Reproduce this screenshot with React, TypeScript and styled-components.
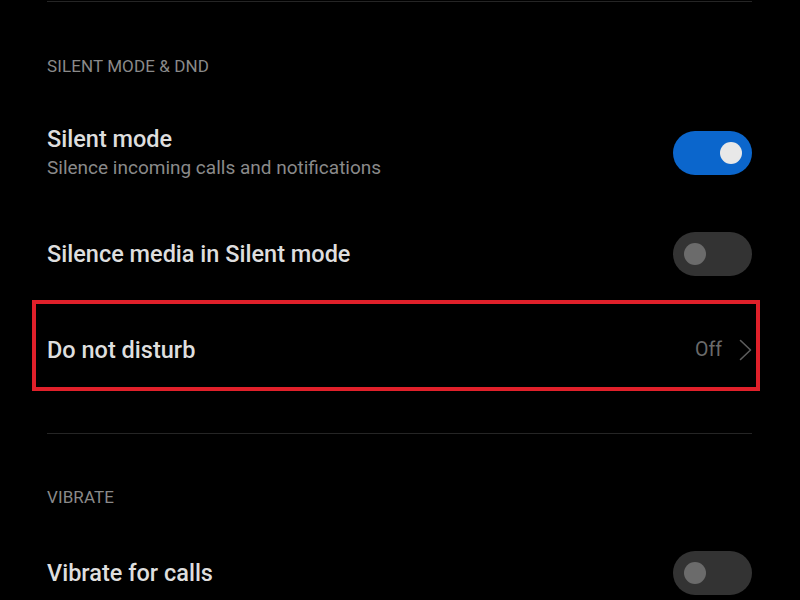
import React from "react";
import styled, { createGlobalStyle } from "styled-components";

const GlobalStyle = createGlobalStyle`
  html, body {
    margin: 0;
    padding: 0;
    background: #000;
  }
  body {
    font-family: Roboto, "Noto Sans", "Liberation Sans", sans-serif;
    -webkit-font-smoothing: antialiased;
  }
`;

const Page = styled.div`
  width: 800px;
  height: 600px;
  overflow: hidden;
  background: #000;
  box-sizing: border-box;
  padding: 1px 48px 0 47px;
  display: flex;
  flex-direction: column;
`;

const Divider = styled.div<{ $top?: number }>`
  height: 1px;
  background: #252525;
  margin-top: ${(p) => p.$top ?? 0}px;
  flex-shrink: 0;
`;

const SectionHeader = styled.div<{ $top: number }>`
  padding-top: ${(p) => p.$top}px;
  font-size: 17px;
  line-height: 20px;
  color: #8a8a8a;
  text-transform: uppercase;
  letter-spacing: 0.1px;
`;

const Row = styled.div<{ $pt: number; $pb: number; $highlight?: boolean }>`
  display: flex;
  align-items: center;
  justify-content: space-between;
  flex-shrink: 0;
  padding-top: ${(p) => p.$pt}px;
  padding-bottom: ${(p) => p.$pb}px;
  ${(p) =>
    p.$highlight
      ? `
    border: 4px solid #e0202a;
    margin: 0 -8px 0 -15px;
    padding-left: 11px;
    padding-right: 4px;
  `
      : ""}
`;

const TextBlock = styled.div`
  display: flex;
  flex-direction: column;
`;

const Title = styled.div`
  font-size: 23.5px;
  line-height: 28px;
  font-weight: 500;
  color: #dedede;
`;

const Subtitle = styled.div`
  font-size: 19px;
  line-height: 24px;
  margin-top: 3px;
  color: #8a8a8a;
`;

const Track = styled.div<{ $on: boolean }>`
  width: 79px;
  height: 44px;
  border-radius: 22px;
  background: ${(p) => (p.$on ? "#0b66cc" : "#333333")};
  display: flex;
  align-items: center;
  justify-content: ${(p) => (p.$on ? "flex-end" : "flex-start")};
  padding: 0 ${(p) => (p.$on ? 10 : 0)}px 0 ${(p) => (p.$on ? 0 : 11)}px;
  box-sizing: border-box;
  flex-shrink: 0;
`;

const Knob = styled.div<{ $on: boolean }>`
  width: 22px;
  height: 22px;
  border-radius: 50%;
  background: ${(p) => (p.$on ? "#e8e8e8" : "#6b6b6b")};
`;

const Trailing = styled.div`
  display: flex;
  align-items: center;
  gap: 17px;
`;

const Value = styled.span`
  font-size: 19.5px;
  line-height: 28px;
  color: #6a6a6a;
`;

const Chevron = styled.svg`
  width: 13px;
  height: 22px;
  display: block;
`;

const Toggle = ({ on }: { on: boolean }) => (
  <Track $on={on}>
    <Knob $on={on} />
  </Track>
);

export default function App() {
  return (
    <>
      <GlobalStyle />
      <Page>
        <Divider />
        <SectionHeader $top={54}>Silent mode &amp; DND</SectionHeader>
        <Row $pt={49} $pb={26}>
          <TextBlock>
            <Title>Silent mode</Title>
            <Subtitle>Silence incoming calls and notifications</Subtitle>
          </TextBlock>
          <Toggle on />
        </Row>
        <Row $pt={26} $pb={24}>
          <Title>Silence media in Silent mode</Title>
          <Toggle on={false} />
        </Row>
        <Row $pt={32} $pb={23} $highlight>
          <Title>Do not disturb</Title>
          <Trailing>
            <Value>Off</Value>
            <Chevron viewBox="0 0 13 22">
              <path
                d="M1.5 1.5 L11.5 11 L1.5 20.5"
                fill="none"
                stroke="#5c5c5c"
                strokeWidth="1.6"
                strokeLinecap="round"
                strokeLinejoin="round"
              />
            </Chevron>
          </Trailing>
        </Row>
        <Divider $top={42} />
        <SectionHeader $top={53}>Vibrate</SectionHeader>
        <Row $pt={44} $pb={0}>
          <Title>Vibrate for calls</Title>
          <Toggle on={false} />
        </Row>
      </Page>
    </>
  );
}
